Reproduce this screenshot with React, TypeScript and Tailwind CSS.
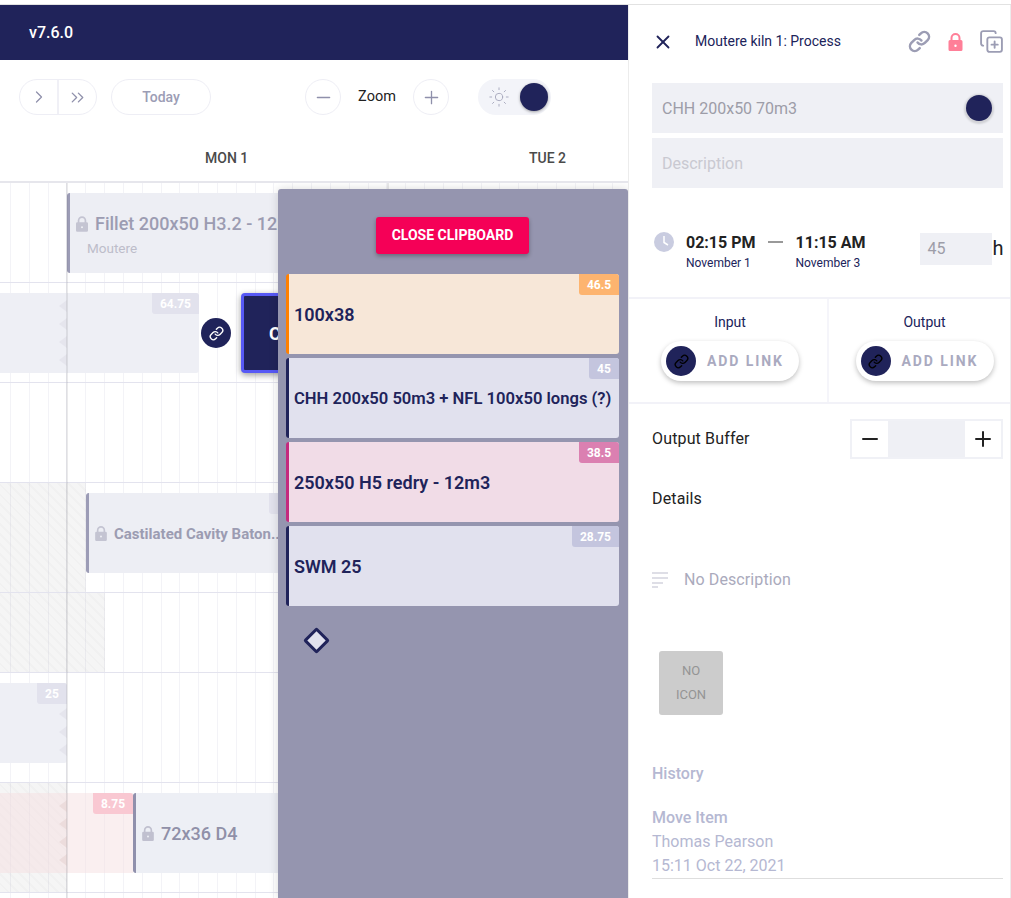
import { Link, Sun, X, CopyPlus, Minus, Plus, ChevronRight, ChevronsRight } from "lucide-react";

const hatch = "bg-[repeating-linear-gradient(45deg,rgba(0,0,0,0.04)_0px,rgba(0,0,0,0.04)_5px,rgba(0,0,0,0.055)_5px,rgba(0,0,0,0.055)_7px)]";

function LockIcon({ className }: { className: string }) {
  return (
    <svg viewBox="0 0 14 18" className={className} fill="currentColor" fillRule="evenodd">
      <path d="M2 7V5a5 5 0 0 1 10 0v2h.5A1.5 1.5 0 0 1 14 8.500v8a1.500 1.500 0 0 1-1.500 1.500h-11A1.500 1.500 0 0 1 0 16.500v-8A1.500 1.500 0 0 1 1.500 7H2Zm2 0h6V5a3 3 0 0 0-6 0v2Zm3 4.500a1.200 1.200 0 1 0 0 2.400 1.200 1.200 0 0 0 0-2.400Z" />
    </svg>
  );
}

function Notches({ color }: { color: string }) {
  return (
    <svg width="8" height="66" viewBox="0 0 8 66" className="absolute left-[59px] top-[7px]" fill={color}>
      <path d="M8 0v12L0 6ZM8 18v12l-8-6ZM8 36v12l-8-6ZM8 54v12l-8-6Z" />
    </svg>
  );
}

function Badge({ text, className }: { text: string; className: string }) {
  return (
    <div className={`absolute right-0 top-0 flex h-[21px] items-center justify-center rounded-bl-[3px] rounded-tr-[3px] text-[12px] font-bold text-white ${className}`}>
      {text}
    </div>
  );
}

function ClipCard({ title, size, hours, bg, border, badge, badgeW }: { title: string; size: string; hours: string; bg: string; border: string; badge: string; badgeW: string }) {
  return (
    <div className={`relative flex h-20 items-center rounded-[3px] border-l-[3px] pl-[5px] font-semibold text-[#20235a] ${size} ${bg} ${border}`}>
      <span className="whitespace-nowrap">{title}</span>
      <Badge text={hours} className={`${badge} ${badgeW}`} />
    </div>
  );
}

function AddLink() {
  return (
    <div className="flex h-10 w-[138px] items-center gap-[11px] rounded-full bg-white pl-[5px] shadow-[0_2px_5px_rgba(0,0,0,0.25)]">
      <div className="flex h-[30px] w-[30px] items-center justify-center rounded-full bg-[#20235a] text-black">
        <Link size={15} strokeWidth={2.2} />
      </div>
      <span className="text-[14px] font-bold tracking-[1.9px] text-[#aaaac0]">ADD LINK</span>
    </div>
  );
}

function Rows() {
  return (
    <div className="flex flex-col">
      <div className="h-[100px] border-b border-[#e3e3ee]" />
      <div className="h-[100px] border-b border-[#e3e3ee]" />
      <div className="h-[100px] border-b border-[#e3e3ee]" />
      <div className="h-[110px] border-b border-[#e3e3ee]" />
      <div className="h-[80px] border-b border-[#e3e3ee]" />
      <div className="h-[110px] border-b border-[#e3e3ee]" />
      <div className="h-[110px] border-b border-[#e3e3ee]" />
    </div>
  );
}

export default function App() {
  return (
    <div className="flex h-[898px] w-[1011px] flex-col overflow-hidden bg-white font-['Roboto',sans-serif]">
      <div className="h-[5px] shrink-0 border-b border-[#e2e2e2] bg-white" />
      <div className="flex min-h-0 flex-1">
        {/* Left: schedule */}
        <div className="flex w-[628px] shrink-0 flex-col">
          <div className="flex h-[55px] shrink-0 items-center bg-[#20235a] pl-[29px] text-[16px] font-medium text-white">v7.6.0</div>
          <div className="flex h-[74px] shrink-0 items-start pl-[19px] pt-[19px]">
            <div className="flex h-9 w-[78px] rounded-full border border-[#eeeef5]">
              <div className="flex w-[39px] items-center justify-center border-r-2 border-[#f0f0f6] text-[#8f90ab]"><ChevronRight size={20} strokeWidth={1.5} /></div>
              <div className="flex flex-1 items-center justify-center text-[#8f90ab]"><ChevronsRight size={21} strokeWidth={1.5} /></div>
            </div>
            <div className="ml-[14px] flex h-9 w-[100px] items-center justify-center rounded-full border border-[#eeeef5] text-[14px] font-medium text-[#9c9db5]">Today</div>
            <div className="ml-[94px] flex h-9 w-9 items-center justify-center rounded-full border border-[#eeeef5] text-[#8f90ab]"><Minus size={21} strokeWidth={1.5} /></div>
            <div className="flex h-9 w-[72px] items-center justify-center text-[14.500px] text-[#222]">Zoom</div>
            <div className="flex h-9 w-9 items-center justify-center rounded-full border border-[#eeeef5] text-[#8f90ab]"><Plus size={21} strokeWidth={1.5} /></div>
            <div className="ml-[29px] flex h-9 w-[73px] items-center justify-between rounded-full bg-[#f3f4f9] pl-[10px] pr-[3px]">
              <Sun size={22} strokeWidth={1} className="text-[#a5a6bb]" />
              <div className="h-7 w-7 rounded-full bg-[#20235a] shadow-[0_1px_3px_rgba(0,0,0,0.35)]" />
            </div>
          </div>
          <div className="relative h-[49px] shrink-0 border-b-2 border-[#e6e6ec] text-[14px] font-medium text-[#4a4a4a]">
            <span className="absolute left-[205px] top-[14px]">MON 1</span>
            <span className="absolute left-[529px] top-[14px]">TUE 2</span>
          </div>
          <div className="relative min-h-0 flex-1 overflow-hidden bg-[repeating-linear-gradient(90deg,transparent_0px,transparent_10px,#f3f3f7_10px,#f3f3f7_11px,transparent_11px,transparent_18.82px)]">
            <Rows />

            {/* hatched zones */}
            <div className={`absolute left-0 top-[300px] h-[109px] w-[86px] ${hatch}`} />
            <div className={`absolute left-0 top-[410px] h-[79px] w-[105px] ${hatch}`} />
            <div className={`absolute left-0 top-[600px] h-[109px] w-[67px] ${hatch}`} />

            {/* Timeline items */}
            <div className="absolute left-[67px] top-[10px] h-20 w-[250px] rounded-[3px] border-l-[3px] border-[#9c9cb6] bg-[#edeef4]">
              <div className="mt-[20px] flex items-center">
                <LockIcon className="ml-[6px] h-[16px] w-[12px] text-[#c4c4d2]" />
                <span className="ml-[7px] whitespace-nowrap text-[18px] font-medium leading-[21px] text-[#9c9cb2]">Fillet 200x50 H3.2 - 12m3</span>
              </div>
              <div className="ml-[17px] mt-[6px] text-[13.500px] leading-4 text-[#bdbdca]">Moutere</div>
            </div>

            <div className="absolute left-0 top-[110px] h-20 w-[199px] rounded-r-[3px] bg-[#eeeff5]">
              <Notches color="#e5e5ed" />
              <Badge text="64.75" className="w-[47px] bg-[#e2e2ed]" />
            </div>

            <div className="absolute left-[201px] top-[135px] flex h-[30px] w-[30px] items-center justify-center rounded-full bg-[#20235a] text-white"><Link size={15} strokeWidth={2.2} /></div>

            <div className="absolute left-[241px] top-[110px] flex h-20 w-[200px] items-center rounded-[4px] border-[3px] border-[#5759f5] bg-[#20235a] pl-[25px] text-[18px] font-bold text-white shadow-[0_2px_6px_rgba(0,0,0,0.4)]">
              <span className="whitespace-nowrap">CHH 200x50 70m3</span>
            </div>

            <div className="absolute left-[86px] top-[310px] flex h-20 w-[260px] items-center rounded-[3px] border-l-[3px] border-[#9c9cb6] bg-[#edeef4]">
              <LockIcon className="ml-[6px] h-[15px] w-[12px] text-[#c4c4d2]" />
              <span className="ml-[7px] translate-y-[1px] whitespace-nowrap text-[15px] font-bold text-[#9c9cb2]">Castilated Cavity Baton...</span>
              <div className="absolute left-[180px] top-0 h-[21px] w-[40px] rounded-bl-[3px] bg-[#e2e2ed]" />
            </div>

            <div className="absolute left-0 top-[500px] h-20 w-[67px] rounded-r-[3px] bg-[#eeeff5]">
              <Notches color="#e5e5ed" />
              <Badge text="25" className="w-[30px] bg-[#e2e2ed]" />
            </div>

            <div className="absolute left-0 top-[610px] h-20 w-[133px] bg-[#f5e0e2]/50">
              <Notches color="#ecdcdc" />
              <Badge text="8.75" className="w-[40px] bg-[#f9c8d2]" />
            </div>

            <div className="absolute left-[133px] top-[610px] flex h-20 w-[200px] items-center rounded-[3px] border-l-[3px] border-[#9090ac] bg-[#edeff5]">
              <LockIcon className="ml-[6px] h-[15px] w-[12px] text-[#c0c0cf]" />
              <span className="ml-[7px] text-[18px] font-medium text-[#9090a8]">72x36 D4</span>
            </div>

            <div className="absolute bottom-0 left-[66px] top-0 w-[2px] bg-[#70707a]/15" />
            <div className="absolute bottom-0 left-[387px] top-0 w-[2px] bg-[#70707a]/15" />

            {/* Clipboard overlay */}
            <div className="absolute bottom-0 left-[278px] right-0 top-[6px] rounded-t-[3px] bg-[#9595af] pl-2 pr-[9px] shadow-[0_0_10px_rgba(0,0,0,0.15)]">
              <div className="flex justify-center pt-7">
                <div className="flex h-[37px] w-[153px] items-center justify-center rounded-[3px] bg-[#f50057] pb-[1px] text-[14px] font-bold text-white shadow-[0_2px_4px_rgba(0,0,0,0.3)]">CLOSE CLIPBOARD</div>
              </div>
              <div className="mt-5 flex flex-col gap-1">
                <ClipCard title="100x38" size="text-[18px]" hours="46.5" bg="bg-[#f7e7d8]" border="border-[#ff8000]" badge="bg-[#fdb46f]" badgeW="w-10" />
                <ClipCard title="CHH 200x50 50m3 + NFL 100x50 longs (?)" size="pt-[2px] text-[16.600px]" hours="45" bg="bg-[#e1e1ee]" border="border-[#20235a]" badge="bg-[#c4c5de]" badgeW="w-[30px]" />
                <ClipCard title="250x50 H5 redry - 12m3" size="text-[18px]" hours="38.5" bg="bg-[#f1dce7]" border="border-[#c42a7e]" badge="bg-[#db80b1]" badgeW="w-10" />
                <ClipCard title="SWM 25" size="text-[18px]" hours="28.75" bg="bg-[#e1e1ee]" border="border-[#20235a]" badge="bg-[#c4c5de]" badgeW="w-[47px]" />
              </div>
              <div className="ml-[21px] mt-[25px] h-[19px] w-[19px] rotate-45 rounded-[2px] border-[3px] border-[#20235a] bg-[#e1e1ee]" />
            </div>
          </div>
        </div>

        {/* Right: details */}
        <div className="flex min-w-0 flex-1 flex-col border-l border-r border-[#ececec] bg-white">
          <div className="flex h-[72px] shrink-0 items-center pl-[23px] pt-[1px]">
            <X size={22} strokeWidth={2} className="text-[#20235a]" />
            <span className="ml-[21px] text-[14px] text-[#20235a]">Moutere kiln 1: Process</span>
            <Link size={23} strokeWidth={2.6} className="ml-[67px] text-[#9c9db4]" />
            <LockIcon className="ml-[17px] h-[18px] w-[15px] text-[#ff7f98]" />
            <CopyPlus size={25} strokeWidth={1.800} className="ml-[16px] text-[#9c9db4]" />
          </div>
          <div className="ml-[23px] mr-[7px] mt-[6px] flex h-[50px] shrink-0 items-center justify-between bg-[#eff0f5] pl-[10px] pr-[11px] text-[16px] text-[#9d9da8]">
            <span className="translate-y-[1px]">CHH 200x50 70m3</span>
            <div className="h-[26px] w-[26px] rounded-full bg-[#20235a] shadow-[0_1px_2px_2px_rgba(0,0,0,0.13)]" />
          </div>
          <div className="ml-[23px] mr-[7px] mt-[5px] flex h-[50px] shrink-0 items-center bg-[#eff0f5] pl-[10px] text-[16px] text-[#c9c9d1]">
            <span className="translate-y-[1px]">Description</span>
          </div>
          <div className="flex h-[111px] shrink-0 items-start border-b-2 border-[#f2f2f8] pl-[25px] pt-[45px]">
            <svg width="20" height="20" viewBox="0 0 20 20" className="-mt-[1px]">
              <circle cx="10" cy="10" r="10" fill="#c9cce0" />
              <path d="M10 4v6.500l4 2.500" stroke="#fff" strokeWidth="1.500" fill="none" />
            </svg>
            <div className="ml-[12px]">
              <div className="text-[16px] font-bold leading-[20px] text-[#222]">02:15 PM</div>
              <div className="mt-[3px] text-[12px] leading-[14px] text-[#20235a]">November 1</div>
            </div>
            <div className="ml-[12px] mt-[8px] h-[2px] w-[15px] bg-[#999]" />
            <div className="ml-[13px]">
              <div className="text-[16px] font-bold leading-[20px] text-[#222]">11:15 AM</div>
              <div className="mt-[3px] text-[12px] leading-[14px] text-[#20235a]">November 3</div>
            </div>
            <div className="ml-[54px] flex h-8 w-[72px] items-center bg-[#eff0f5] pl-2 text-[16px] text-[#9d9da8]">45</div>
            <span className="ml-[1px] text-[20px] leading-[30px] text-[#222]">h</span>
          </div>
          <div className="flex h-[105px] shrink-0 border-b-2 border-[#f2f2f8]">
            <div className="flex w-[200px] flex-col items-center border-r-2 border-[#f5f5fa] pl-[4px] pt-[15px]">
              <span className="text-[14px] leading-4 text-[#20235a]">Input</span>
              <div className="mt-[11px]"><AddLink /></div>
            </div>
            <div className="flex flex-1 flex-col items-center pl-[10px] pt-[15px]">
              <span className="text-[14px] leading-4 text-[#20235a]">Output</span>
              <div className="mt-[11px]"><AddLink /></div>
            </div>
          </div>
          <div className="ml-[23px] mr-[7px] mt-[15px] flex h-10 shrink-0 items-center justify-between">
            <span className="text-[16px] tracking-[0.15px] text-[#222]">Output Buffer</span>
            <div className="flex h-10 w-[153px] border-2 border-[#f0f1f6] bg-[#eff0f5]">
              <div className="flex w-9 items-center justify-center bg-white text-[#222]"><Minus size={24} strokeWidth={2} /></div>
              <div className="flex-1" />
              <div className="flex w-9 items-center justify-center bg-white text-[#222]"><Plus size={24} strokeWidth={2} /></div>
            </div>
          </div>
          <div className="ml-[23px] mt-[30px] text-[16px] tracking-[0.15px] leading-[20px] text-[#222]">Details</div>
          <div className="ml-[23px] mt-[61px] flex items-center">
            <svg width="16" height="16" viewBox="0 0 16 16" stroke="#d4d4de" strokeWidth="1.500">
              <path d="M0 1h16M0 6h16M0 11h11M0 15h6" />
            </svg>
            <span className="ml-4 text-[16px] leading-[20px] tracking-[0.1px] text-[#aaaabc]">No Description</span>
          </div>
          <div className="ml-[30px] mt-[61px] flex h-16 w-16 flex-col items-center justify-center rounded-[3px] bg-[#cccccc] text-[13px] leading-6 text-[#949494]">
            <span>NO</span>
            <span>ICON</span>
          </div>
          <div className="ml-[23px] mt-[49px] text-[16px] font-medium leading-[20px] text-[#b5b8d2]">History</div>
          <div className="ml-[23px] mr-[7px] mt-[22px] border-b border-[#dedede] text-[16px] leading-6 text-[#b5b8d2]">
            <div className="font-medium">Move Item</div>
            <div>Thomas Pearson</div>
            <div>15:11 Oct 22, 2021</div>
          </div>
        </div>
      </div>
    </div>
  );
}
